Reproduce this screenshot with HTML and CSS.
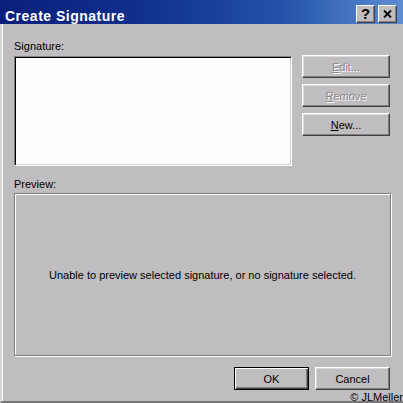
FILE: index.html
```html
<!DOCTYPE html>
<html lang="en">
<head>
    <meta charset="UTF-8">
    <title>Create Signature</title>
    <link rel="stylesheet" href="styles.css">
</head>
<body>
    <div class="window">
        <div class="titlebar">
            <span class="title">Create Signature</span>
            <div class="caption-buttons">
                <span class="cap-btn help">?</span>
                <span class="cap-btn close">
                    <svg width="9" height="8" viewBox="0 0 9 8"><path d="M1 0.5 L8 7.5 M8 0.5 L1 7.5" stroke="#000" stroke-width="1.8" fill="none"/></svg>
                </span>
            </div>
        </div>
        <div class="client">
            <div class="label">Signature:</div>
            <div class="sig-row">
                <div class="sig-box"></div>
                <div class="side-buttons">
                    <button class="btn" disabled><u>E</u>dit...</button>
                    <button class="btn" disabled><u>R</u>emove</button>
                    <button class="btn"><u>N</u>ew...</button>
                </div>
            </div>
            <div class="label preview-label">Preview:</div>
            <div class="preview">Unable to preview selected signature, or no signature selected.</div>
            <div class="actions">
                <button class="btn wide default">OK</button>
                <button class="btn wide">Cancel</button>
            </div>
            <span class="credit">&copy; JLMeller</span>
        </div>
    </div>
</body>
</html>
```

FILE: styles.css
```css
body {
    margin: 0;
    font-family: 'Liberation Sans', Arial, sans-serif;
    font-size: 11px;
    color: #000;
}
.window {
    position: relative;
    width: 403px;
    height: 403px;
    background-color: #c0bdc0;
    display: flex;
    flex-direction: column;
    overflow: hidden;
}
.titlebar {
    flex: none;
    height: 24px;
    box-sizing: border-box;
    padding: 0 6px 0 5px;
    display: flex;
    justify-content: space-between;
    align-items: flex-start;
    background: linear-gradient(to right, #0a1f7c 0%, #10308c 35%, #2352a8 70%, #5d8ed4 100%);
}
.title {
    margin-top: 7px;
    color: #fff;
    font-weight: bold;
    font-size: 14px;
    line-height: 18px;
    letter-spacing: 0.5px;
}
.caption-buttons {
    display: flex;
    gap: 3px;
    margin-top: 5px;
}
.cap-btn {
    width: 19px;
    height: 18px;
    box-sizing: border-box;
    display: flex;
    justify-content: center;
    align-items: center;
    background-color: #c0bdc0;
    border: 1px solid;
    border-color: #fff #404040 #404040 #fff;
    box-shadow: inset -1px -1px 0 #808080;
    font-weight: bold;
    font-size: 15px;
    line-height: 14px;
}
.client {
    flex: 1;
    box-sizing: border-box;
    padding: 16px 12px 0 12px;
    border-left: 2px solid #d6d3d6;
    border-bottom: 2px solid #7a777a;
    box-shadow: inset 1px 0 0 #fff;
    display: flex;
    flex-direction: column;
    align-items: flex-start;
}
.label {
    height: 13px;
    line-height: 13px;
}
.sig-row {
    display: flex;
    align-items: flex-start;
    gap: 10px;
    margin-top: 2px;
}
.sig-box {
    width: 278px;
    height: 110px;
    margin-top: 1px;
    box-sizing: border-box;
    background-color: #fffcff;
    border: 1px solid;
    border-color: #808080 #fff #fff #808080;
    box-shadow: inset 1px 1px 0 #000, inset -1px -1px 0 #d4d0d4;
}
.side-buttons {
    display: flex;
    flex-direction: column;
    gap: 6px;
}
.btn {
    width: 88px;
    height: 23px;
    box-sizing: border-box;
    padding: 0;
    margin: 0;
    font-family: 'Liberation Sans', Arial, sans-serif;
    font-size: 11px;
    color: #000;
    background-color: #c0bdc0;
    border: 1px solid;
    border-color: #fff #404040 #404040 #fff;
    border-radius: 0;
    box-shadow: inset -1px -1px 0 #808080, inset 1px 1px 0 #dcd9dc;
}
.btn:disabled {
    color: #8a878a;
    text-shadow: 1px 1px 0 #fff;
}
.btn.wide {
    width: 75px;
}
.btn.default {
    border: 1px solid #000;
    box-shadow: inset 1px 1px 0 #fff, inset -1px -1px 0 #404040, inset -2px -2px 0 #808080;
}
.preview-label {
    margin-top: 12px;
}
.preview {
    width: 377px;
    height: 163px;
    margin-top: 2px;
    box-sizing: border-box;
    border: 1px solid #808080;
    box-shadow: inset 1px 1px 0 #fff, 1px 1px 0 #fff;
    display: flex;
    justify-content: center;
    align-items: center;
}
.actions {
    align-self: flex-end;
    display: flex;
    gap: 6px;
    margin-top: 11px;
    margin-right: 1px;
}
.credit {
    position: absolute;
    right: 0;
    bottom: -1px;
    line-height: 13px;
}
```
